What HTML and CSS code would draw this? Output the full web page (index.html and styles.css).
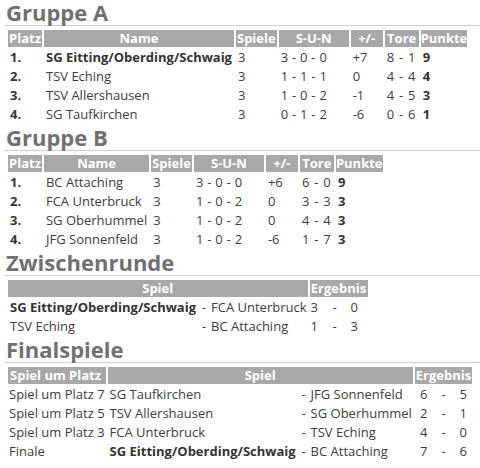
FILE: index.html
```html
<!DOCTYPE html>
<html lang="de">
<head>
<meta charset="utf-8">
<title>Turnier</title>
<link rel="stylesheet" href="styles.css">
</head>
<body>
<h2 class="title">Gruppe A</h2>
<table class="tbl group">
  <tr><th>Platz</th><th>Name</th><th>Spiele</th><th class="w-sun">S-U-N</th><th class="w-diff">+/-</th><th class="w-tore">Tore</th><th class="pk">Punkte</th></tr>
  <tr><td class="b">1.</td><td class="b">SG Eitting/Oberding/Schwaig</td><td>3</td><td class="sun">3 - 0 - 0</td><td>+7</td><td class="tore">8 - 1</td><td class="b">9</td></tr>
  <tr><td class="b">2.</td><td>TSV Eching</td><td>3</td><td class="sun">1 - 1 - 1</td><td>0</td><td class="tore">4 - 4</td><td class="b">4</td></tr>
  <tr><td class="b">3.</td><td>TSV Allershausen</td><td>3</td><td class="sun">1 - 0 - 2</td><td>-1</td><td class="tore">4 - 5</td><td class="b">3</td></tr>
  <tr><td class="b">4.</td><td>SG Taufkirchen</td><td>3</td><td class="sun">0 - 1 - 2</td><td>-6</td><td class="tore">0 - 6</td><td class="b">1</td></tr>
</table>
<h2 class="title">Gruppe B</h2>
<table class="tbl group">
  <tr><th>Platz</th><th>Name</th><th>Spiele</th><th class="w-sun">S-U-N</th><th class="w-diff">+/-</th><th class="w-tore">Tore</th><th class="pk">Punkte</th></tr>
  <tr><td class="b">1.</td><td>BC Attaching</td><td>3</td><td class="sun">3 - 0 - 0</td><td>+6</td><td class="tore">6 - 0</td><td class="b">9</td></tr>
  <tr><td class="b">2.</td><td>FCA Unterbruck</td><td>3</td><td class="sun">1 - 0 - 2</td><td>0</td><td class="tore">3 - 3</td><td class="b">3</td></tr>
  <tr><td class="b">3.</td><td>SG Oberhummel</td><td>3</td><td class="sun">1 - 0 - 2</td><td>0</td><td class="tore">4 - 4</td><td class="b">3</td></tr>
  <tr><td class="b">4.</td><td>JFG Sonnenfeld</td><td>3</td><td class="sun">1 - 0 - 2</td><td>-6</td><td class="tore">1 - 7</td><td class="b">3</td></tr>
</table>
<h2 class="title">Zwischenrunde</h2>
<table class="tbl games">
  <tr><th colspan="3">Spiel</th><th colspan="3">Ergebnis</th></tr>
  <tr><td class="home b">SG Eitting/Oberding/Schwaig</td><td class="dash">-</td><td class="away">FCA Unterbruck</td><td class="sc">3</td><td class="sc mid">-</td><td class="sc">0</td></tr>
  <tr><td class="home">TSV Eching</td><td class="dash">-</td><td class="away">BC Attaching</td><td class="sc">1</td><td class="sc mid">-</td><td class="sc">3</td></tr>
</table>
<h2 class="title">Finalspiele</h2>
<table class="tbl games finals">
  <tr><th class="left">Spiel um Platz</th><th colspan="3">Spiel</th><th colspan="3">Ergebnis</th></tr>
  <tr><td class="round">Spiel um Platz 7</td><td class="home">SG Taufkirchen</td><td class="dash">-</td><td class="away">JFG Sonnenfeld</td><td class="sc">6</td><td class="sc mid">-</td><td class="sc">5</td></tr>
  <tr><td class="round">Spiel um Platz 5</td><td class="home">TSV Allershausen</td><td class="dash">-</td><td class="away">SG Oberhummel</td><td class="sc">2</td><td class="sc mid">-</td><td class="sc">1</td></tr>
  <tr><td class="round">Spiel um Platz 3</td><td class="home">FCA Unterbruck</td><td class="dash">-</td><td class="away">TSV Eching</td><td class="sc">4</td><td class="sc mid">-</td><td class="sc">0</td></tr>
  <tr><td class="round">Finale</td><td class="home b">SG Eitting/Oberding/Schwaig</td><td class="dash">-</td><td class="away">BC Attaching</td><td class="sc">7</td><td class="sc mid">-</td><td class="sc">6</td></tr>
</table>
</body>
</html>
```
FILE: styles.css
```css
html, body {
  margin: 0;
  background: #ffffff;
}
body {
  padding: 0 0 0 5px;
  font-family: "Open Sans", "DejaVu Sans", sans-serif;
  font-size: 13px;
  color: #3d3d3d;
}
.title {
  margin: 0;
  font-size: 22px;
  line-height: 25px;
  font-weight: 700;
  color: #717171;
  border-bottom: 1px solid #cfcfcf;
  padding-left: 1px;
}
.tbl {
  border-collapse: separate;
  border-spacing: 2px;
  margin: 2px 0 0 1px;
}
.tbl th {
  background: #a8a8a8;
  color: #ffffff;
  font-weight: 700;
  text-align: center;
  padding: 0 1px;
  height: 17px;
  line-height: 17px;
  white-space: nowrap;
}
.tbl th.pk {
  padding: 0;
}
.tbl th.left {
  text-align: left;
  padding-left: 2px;
}
.tbl td {
  padding: 0 2px;
  height: 17px;
  line-height: 17px;
  white-space: nowrap;
  text-align: left;
}
.b {
  font-weight: 700;
  color: #333333;
}
.w-sun { width: 68px; }
.w-diff { width: 30px; }
.w-tore { width: 32px; }
.tbl td.sun {
  word-spacing: 0.5px;
}
.tbl td.tore {
  word-spacing: 1.5px;
}
.tbl td.home {
  width: 187px;
  padding: 0 2px;
}
.tbl td.round {
  padding: 0 1px;
}
.tbl td.dash {
  width: 5px;
  padding: 0 1px;
}
.tbl td.away {
  padding: 0 1px;
}
.finals td.away {
  width: 101px;
}
.tbl td.sc {
  width: 16px;
  padding: 0 1px;
}
.tbl td.mid {
  width: 14px;
  padding: 0 1px 0 3px;
}
.finals td.sc {
  width: 15px;
  text-align: center;
  padding: 0 1px;
}
```
